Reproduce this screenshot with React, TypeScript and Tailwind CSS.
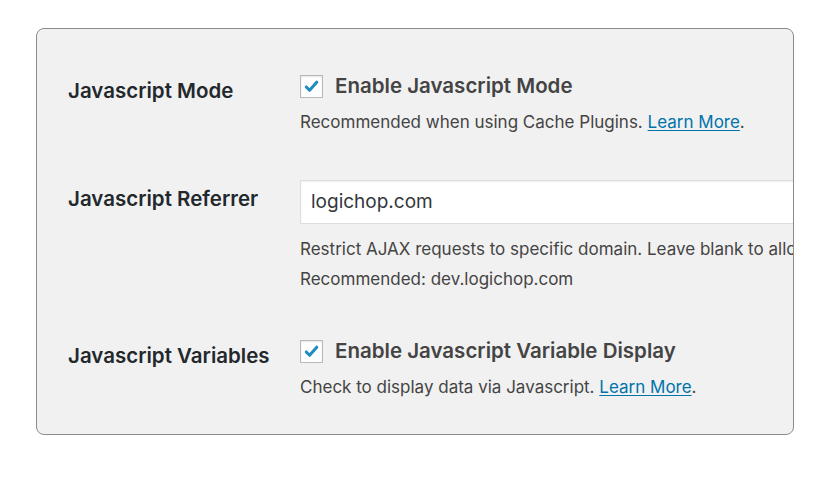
import React from 'react';

const Check = () => (
    <span className="flex h-[23px] w-[23px] flex-shrink-0 items-center justify-center border border-[#b4b9be] bg-white shadow-[inset_0_1px_2px_rgba(0,0,0,0.1)]">
        <svg viewBox="0 0 20 20" className="h-[19px] w-[19px]" aria-hidden="true">
            <path d="M4.5 10.5l3.5 3.5 7.5-8.5" fill="none" stroke="#1e8cbe" strokeWidth="3.2" strokeLinecap="round" strokeLinejoin="round" />
        </svg>
    </span>
);

const LearnMore = () => (
    <>
        <a href="#" className="text-[#0073aa] underline underline-offset-2">Learn More</a>.
    </>
);

export default function App() {
    return (
        <div className="h-[480px] w-[830px] bg-white pl-[36px] pt-[28px]" style={{ fontFamily: 'Inter, "Liberation Sans", sans-serif' }}>
            <div className="h-[407px] w-[758px] overflow-hidden rounded-[8px] border border-[#8c8c8c] bg-[#f1f1f1] pl-[31px] pt-[43px]">
                {/* Javascript Mode */}
                <div className="flex">
                    <div className="w-[232px] flex-shrink-0 pt-[5px] text-[20.5px] leading-[28px] font-semibold text-[#23282d]">Javascript Mode</div>
                    <div>
                        <label className="flex h-[28px] items-center gap-[12px] text-[20.5px] leading-[28px] font-semibold text-[#444]">
                            <Check />
                            Enable Javascript Mode
                        </label>
                        <p className="mt-[10px] text-[17px] leading-[24px] text-[#444]">
                            Recommended when using Cache Plugins. <LearnMore />
                        </p>
                    </div>
                </div>

                {/* Javascript Referrer */}
                <div className="mt-[46px] flex">
                    <div className="w-[232px] flex-shrink-0 pt-[5px] text-[20.5px] leading-[28px] font-semibold text-[#23282d]">Javascript Referrer</div>
                    <div className="w-[560px] flex-shrink-0">
                        <div className="flex h-[44px] items-center border border-[#ddd] bg-white px-[10px] text-[19px] text-[#32373c] shadow-[inset_0_1px_2px_rgba(0,0,0,0.07)]">
                            logichop.com
                        </div>
                        <p className="mt-[13px] whitespace-nowrap text-[17px] leading-[24px] text-[#444]">
                            Restrict AJAX requests to specific domain. Leave blank to allow all domains.
                        </p>
                        <p className="mt-[6px] text-[17px] leading-[24px] text-[#444]">Recommended: dev.logichop.com</p>
                    </div>
                </div>

                {/* Javascript Variables */}
                <div className="mt-[46px] flex">
                    <div className="w-[232px] flex-shrink-0 pt-[5px] text-[20.5px] leading-[28px] font-semibold text-[#23282d]">Javascript Variables</div>
                    <div>
                        <label className="flex h-[28px] items-center gap-[12px] text-[20.5px] leading-[28px] font-semibold text-[#444]">
                            <Check />
                            Enable Javascript Variable Display
                        </label>
                        <p className="mt-[10px] text-[17px] leading-[24px] text-[#444]">
                            Check to display data via Javascript. <LearnMore />
                        </p>
                    </div>
                </div>
            </div>
        </div>
    );
}
